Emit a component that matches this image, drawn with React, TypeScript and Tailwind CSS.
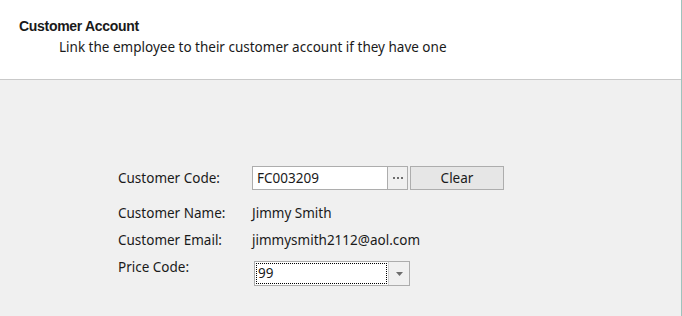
const ui = { fontFamily: '"Noto Sans", "Open Sans", sans-serif' }
const title = { fontFamily: '"Liberation Sans", Arial, sans-serif' }

export default function App() {
  return (
    <div className="w-[682px] h-[316px] flex flex-col overflow-hidden border-r border-[#9fc3bd] text-[#1a1a1a]" style={ui}>
      {/* Header */}
      <div className="h-[80px] shrink-0 bg-white border-b border-[#c9c9c9] pt-[18px]">
        <div className="pl-[19px] text-[14px] font-bold tracking-[-0.3px] leading-[16px]" style={title}>
          Customer Account
        </div>
        <div className="pl-[59px] mt-[3px] text-[13.5px] leading-[20px]">
          Link the employee to their customer account if they have one
        </div>
      </div>

      {/* Body */}
      <div className="flex-1 bg-[#f0f0f0] pl-[118px] pt-[86px] text-[13.5px]">
        <div className="flex items-center h-[24px]">
          <div className="w-[134px] leading-[20px]">Customer Code:</div>
          <div className="flex h-[24px]">
            <div className="w-[136px] bg-white border border-[#adadad] px-[4px] leading-[22px]">FC003209</div>
            <div className="w-[20px] border border-l-0 border-[#adadad] bg-[#f0f0f0] flex items-center justify-center gap-[2px]">
              <span className="w-[2px] h-[2px] bg-[#6d6d6d]" />
              <span className="w-[2px] h-[2px] bg-[#6d6d6d]" />
              <span className="w-[2px] h-[2px] bg-[#6d6d6d]" />
            </div>
            <button className="ml-[2px] w-[94px] border border-[#adadad] bg-[#e6e6e6] leading-[22px] text-center">
              Clear
            </button>
          </div>
        </div>

        <div className="flex mt-[13px] leading-[20px]">
          <div className="w-[134px]">Customer Name:</div>
          <div>Jimmy Smith</div>
        </div>

        <div className="flex mt-[7px] leading-[20px]">
          <div className="w-[134px]">Customer Email:</div>
          <div>jimmysmith2112@aol.com</div>
        </div>

        <div className="flex items-start mt-[11px]">
          <div className="w-[136px] leading-[20px] -mt-[4px]">Price Code:</div>
          <div className="flex w-[156px] h-[25px] border border-[#acacac] bg-white">
            <div className="flex-1 p-[1px]">
              <div className="h-full border border-dotted border-black px-[1px] leading-[19px]">99</div>
            </div>
            <div className="w-[21px] border-l border-[#d0d0d0] bg-[#f0f0f0] flex items-center justify-center">
              <svg width="7" height="4" viewBox="0 0 7 4">
                <path d="M0 0h7L3.5 4z" fill="#6d6d6d" />
              </svg>
            </div>
          </div>
        </div>
      </div>
    </div>
  )
}
